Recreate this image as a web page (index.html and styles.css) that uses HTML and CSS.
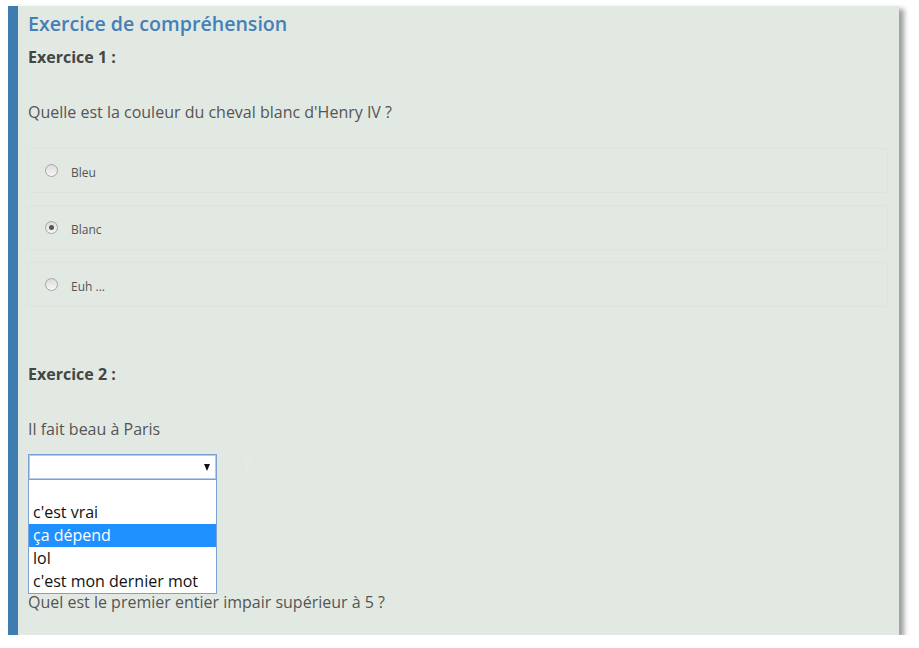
FILE: index.html
```html
<!DOCTYPE html>
<html lang="fr">
<head>
<meta charset="utf-8">
<title>Exercice de compréhension</title>
<link rel="stylesheet" href="styles.css">
</head>
<body>
<div class="panel">
  <h1 class="title">Exercice de compréhension</h1>
  <p class="ex-title">Exercice 1 :</p>
  <p class="question q1">Quelle est la couleur du cheval blanc d'Henry IV ?</p>
  <div class="choices">
    <label class="choice"><span class="radio"></span><span class="choice-label">Bleu</span></label>
    <label class="choice"><span class="radio checked"></span><span class="choice-label">Blanc</span></label>
    <label class="choice"><span class="radio"></span><span class="choice-label">Euh ...</span></label>
  </div>
  <p class="ex-title ex2">Exercice 2 :</p>
  <p class="question q2">Il fait beau à Paris</p>
  <div class="select-row">
    <div class="select-wrap">
      <div class="select"><span class="arrow"></span></div>
      <ul class="dropdown">
        <li class="opt blank"></li>
        <li class="opt">c'est vrai</li>
        <li class="opt active">ça dépend</li>
        <li class="opt">lol</li>
        <li class="opt">c'est mon dernier mot</li>
      </ul>
    </div>
    <span class="hint">?</span>
  </div>
  <p class="question q3">Quel est le premier entier impair supérieur à 5 ?</p>
</div>
</body>
</html>
```

FILE: styles.css
```css
html, body {
  margin: 0;
  padding: 0;
  background: #ffffff;
}

body {
  font-family: "Open Sans", "DejaVu Sans", sans-serif;
  color: #555555;
}

.panel {
  box-sizing: border-box;
  margin: 6px 0 0 8px;
  width: 891px;
  height: 629px;
  background: #e2e9e3;
  border-left: 10px solid #3f7db1;
  padding: 6px 11px 0 10px;
  box-shadow: 5px 3px 5px rgba(0, 0, 0, 0.38);
}

.title {
  margin: 0;
  font-size: 19.6px;
  line-height: 24px;
  font-weight: 600;
  color: #4480b7;
}

.ex-title {
  margin: 10px 0 0;
  font-size: 16px;
  line-height: 22px;
  font-weight: 700;
  color: #454545;
}

.ex-title.ex2 {
  margin-top: 56px;
}

.question {
  margin: 33px 0 0;
  font-size: 16px;
  line-height: 22px;
  color: #555555;
}

.choices {
  margin-top: 25px;
  display: flex;
  flex-direction: column;
  gap: 12px;
}

.choice {
  box-sizing: border-box;
  height: 45px;
  border: 1px solid #dce4dd;
  border-radius: 2px;
  display: flex;
  align-items: center;
  padding: 3px 0 0 16px;
  gap: 13px;
}

.radio {
  box-sizing: border-box;
  width: 13px;
  height: 13px;
  border-radius: 50%;
  border: 1px solid #a4a4a4;
  background: linear-gradient(#dcdcdc, #f7f7f7);
  position: relative;
  top: -2px;
}

.radio.checked::after {
  content: "";
  position: absolute;
  left: 3px;
  top: 3px;
  width: 5px;
  height: 5px;
  border-radius: 50%;
  background: #555555;
}

.choice-label {
  font-size: 12px;
  color: #555555;
}

.q2 {
  margin-top: 33px;
}

.select-row {
  margin-top: 14px;
  display: flex;
  align-items: flex-start;
  gap: 26px;
}

.select-wrap {
  position: relative;
  width: 189px;
}

.select {
  box-sizing: border-box;
  height: 26px;
  background: #ffffff;
  border: 1px solid #7c9fd6;
  box-shadow: inset 0 0 0 1px #b7c9ec;
  display: flex;
  align-items: center;
  justify-content: flex-end;
  padding-right: 6px;
}

.arrow {
  width: 0;
  height: 0;
  border-left: 3.5px solid transparent;
  border-right: 3.5px solid transparent;
  border-top: 7px solid #111111;
}

.dropdown {
  position: absolute;
  left: 0;
  top: 26px;
  box-sizing: border-box;
  width: 189px;
  margin: 0;
  padding: 0;
  list-style: none;
  background: #ffffff;
  border: 1px solid #7c9fd6;
  border-top: none;
  font-family: "Open Sans", "DejaVu Sans", sans-serif;
  font-size: 16px;
  color: #111111;
}

.opt {
  height: 23px;
  line-height: 23px;
  padding-left: 4px;
  white-space: nowrap;
}

.opt.blank {
  height: 21px;
}

.opt.active {
  background: #1e90ff;
  color: #ffffff;
}

.hint {
  font-size: 17px;
  font-weight: 700;
  line-height: 26px;
  color: #e6ebe7;
}

.q3 {
  margin-top: 111px;
}
```
